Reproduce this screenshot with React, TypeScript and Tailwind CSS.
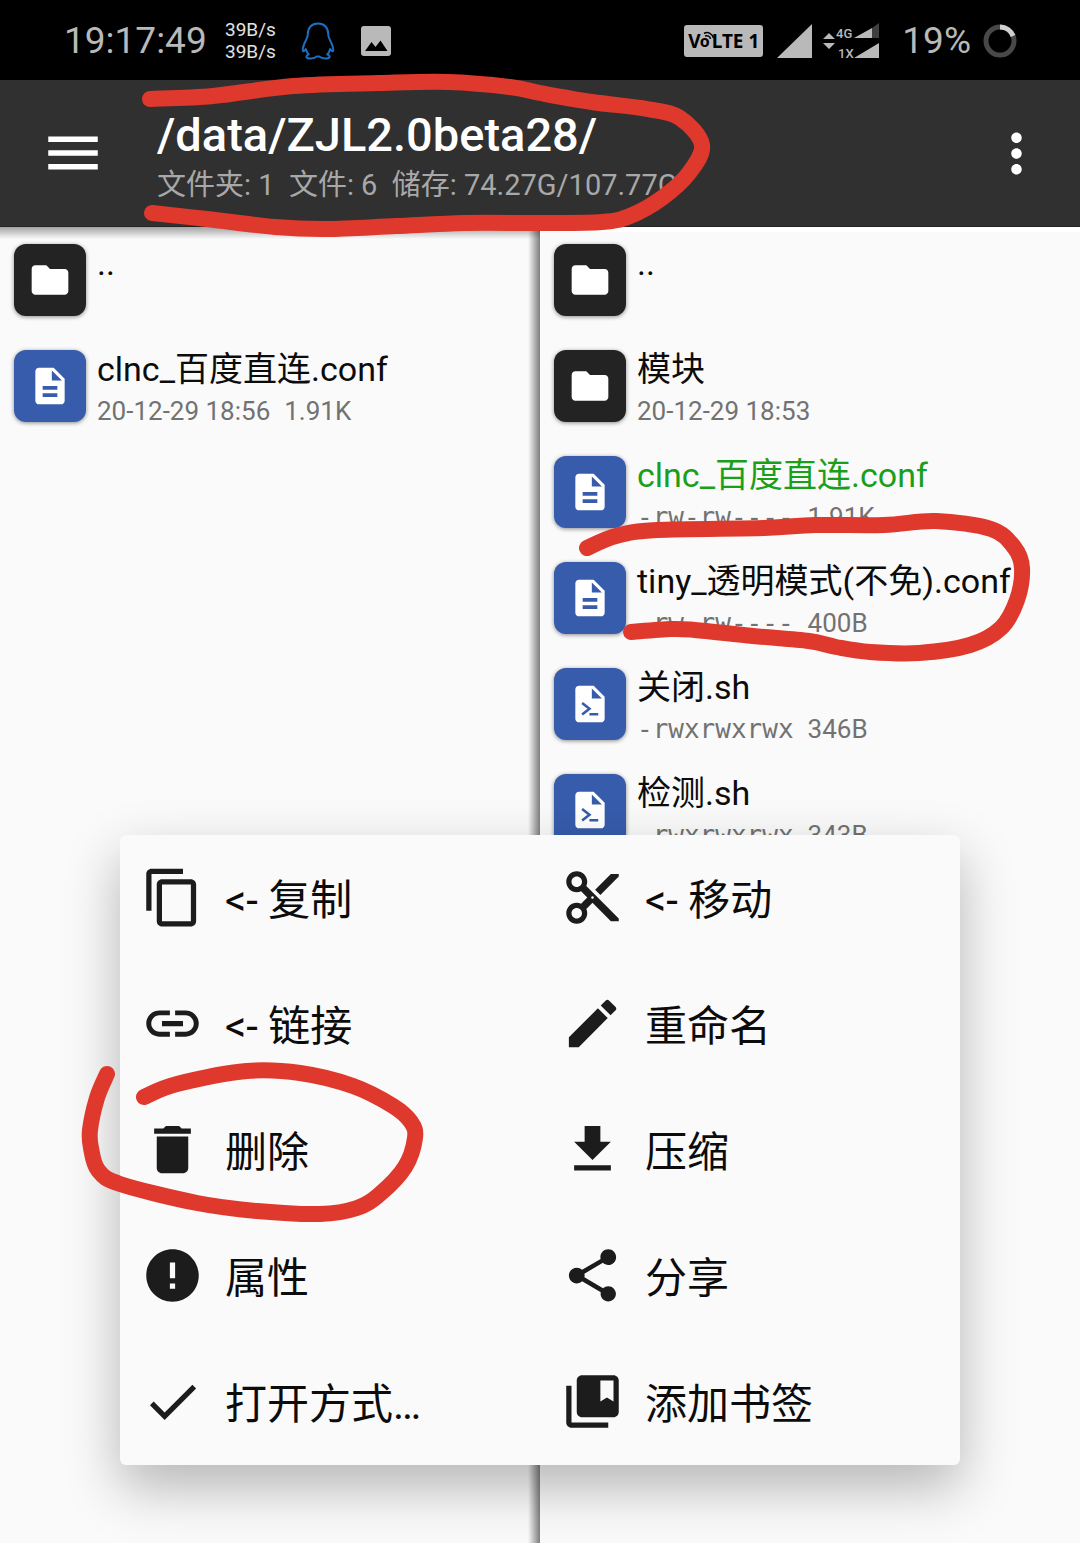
import type { ReactNode } from "react";
import type { IconType } from "react-icons";
import {
  MdCheck,
  MdCollectionsBookmark,
  MdContentCopy,
  MdContentCut,
  MdDelete,
  MdDescription,
  MdEdit,
  MdError,
  MdFileDownload,
  MdFolder,
  MdLink,
  MdMenu,
  MdMoreVert,
  MdShare,
} from "react-icons/md";

type Kind = "folder" | "doc" | "script";

interface Entry {
  name: string;
  kind: Kind;
  date?: string;
  perms?: string;
  size?: string;
  highlight?: boolean;
}

const leftEntries: Entry[] = [
  { name: "..", kind: "folder" },
  { name: "clnc_百度直连.conf", kind: "doc", date: "20-12-29 18:56", size: "1.91K" },
];

const rightEntries: Entry[] = [
  { name: "..", kind: "folder" },
  { name: "模块", kind: "folder", date: "20-12-29 18:53" },
  { name: "clnc_百度直连.conf", kind: "doc", perms: "-rw-rw----", size: "1.91K", highlight: true },
  { name: "tiny_透明模式(不免).conf", kind: "doc", perms: "-rw-rw----", size: "400B" },
  { name: "关闭.sh", kind: "script", perms: "-rwxrwxrwx", size: "346B" },
  { name: "检测.sh", kind: "script", perms: "-rwxrwxrwx", size: "343B" },
];

const actions: { label: string; icon: IconType }[] = [
  { label: "<- 复制", icon: MdContentCopy },
  { label: "<- 移动", icon: MdContentCut },
  { label: "<- 链接", icon: MdLink },
  { label: "重命名", icon: MdEdit },
  { label: "删除", icon: MdDelete },
  { label: "压缩", icon: MdFileDownload },
  { label: "属性", icon: MdError },
  { label: "分享", icon: MdShare },
  { label: "打开方式…", icon: MdCheck },
  { label: "添加书签", icon: MdCollectionsBookmark },
];

type Point = [number, number];

/* Freehand marker strokes, as the points the pen went through. */
const strokes: Point[][] = [
  [
    [150, 99], [213, 96], [293, 86], [379, 83], [448, 82], [510, 87], [540, 93], [592, 102],
    [647, 109], [680, 118], [702, 145], [689, 173], [662, 198], [630, 216], [602, 222], [540, 223],
    [465, 223], [396, 226], [327, 229], [275, 227], [207, 219], [152, 213],
  ],
  [
    [587, 548], [616, 536], [657, 530], [764, 528], [815, 525], [884, 525], [936, 521], [991, 529],
    [1014, 547], [1022, 568], [1017, 600], [1001, 628], [970, 645], [919, 653], [870, 652],
    [836, 647], [809, 641], [753, 636], [695, 630], [671, 629], [631, 632],
  ],
  [
    [144, 1097], [177, 1084], [247, 1071], [300, 1073], [353, 1086], [393, 1106], [411, 1122],
    [415, 1138], [405, 1167], [380, 1194], [357, 1208], [320, 1214], [257, 1211], [197, 1203],
    [120, 1184], [98, 1170], [91, 1148], [90, 1130], [97, 1098], [107, 1074],
  ],
];

function smooth(p: Point[]): string {
  let d = `M${p[0][0]} ${p[0][1]}`;
  for (let i = 0; i < p.length - 1; i++) {
    const a = p[i - 1] ?? p[i];
    const b = p[i];
    const c = p[i + 1];
    const e = p[i + 2] ?? c;
    d += `C${b[0] + (c[0] - a[0]) / 6} ${b[1] + (c[1] - a[1]) / 6} ${c[0] - (e[0] - b[0]) / 6} ${c[1] - (e[1] - b[1]) / 6} ${c[0]} ${c[1]}`;
  }
  return d;
}

function ScriptIcon() {
  return (
    <svg viewBox="0 0 24 24" className="size-11" aria-hidden="true">
      <path
        fill="currentColor"
        d="M14 2H6c-1.1 0-2 .9-2 2v16c0 1.1.9 2 2 2h12c1.1 0 2-.9 2-2V8l-6-6zm-1 7V3.5L18.5 9H13z"
      />
      <path d="M7.7 11.5l4 3.100-4 3.100M11.700 17.600h4.800" fill="none" stroke="#365cab" strokeWidth="1.4" />
    </svg>
  );
}

function Tile({ kind }: { kind: Kind }) {
  return (
    <span
      className={`flex size-18 shrink-0 items-center justify-center rounded-xl text-white shadow-[0_1px_4px_rgba(0,0,0,0.45)] ${
        kind === "folder" ? "bg-[#232323]" : "bg-[#365cab]"
      }`}
    >
      {kind === "folder" && <MdFolder className="size-11" />}
      {kind === "doc" && <MdDescription className="size-11" />}
      {kind === "script" && <ScriptIcon />}
    </span>
  );
}

function FileList({ entries, label }: { entries: Entry[]; label: string }) {
  return (
    <ul aria-label={label} className="pt-3">
      {entries.map((e) => (
        <li key={e.name}>
          <button type="button" className="flex h-[106px] w-full items-start gap-[11px] pt-[5px] pl-3.5 text-left">
            <Tile kind={e.kind} />
            <span className="flex min-w-0 flex-col whitespace-nowrap">
              <span className={`text-[34px] leading-[38px] ${e.highlight ? "text-[#1a9f1a]" : "text-[#0c0c0c]"}`}>
                {e.name}
              </span>
              <span className="flex gap-3.5 text-[26px] leading-[46px] text-[#727272]">
                {e.date && <span>{e.date}</span>}
                {e.perms && <span className="font-['DejaVu_Sans_Mono',monospace]">{e.perms}</span>}
                {e.size && <span>{e.size}</span>}
              </span>
            </span>
          </button>
        </li>
      ))}
    </ul>
  );
}

function StatusBar() {
  return (
    <div className="flex h-20 items-center justify-between bg-black pt-0.5 pr-[63px] pl-16 text-[#b9b9b9]">
      <div className="flex items-center">
        <span className="w-[161px] text-[37px]">19:17:49</span>
        <span className="flex w-[76px] flex-col text-[19px] leading-[22px] text-[#e2e2e2]">
          <span>39B/s</span>
          <span>39B/s</span>
        </span>
        <svg viewBox="0 0 34 38" className="h-[38px] w-[34px]" fill="none" stroke="#1b6ec2" strokeWidth="2" strokeLinejoin="round" aria-hidden="true">
          <path d="M17 1.500C10.500 1.500 6.800 6 6.800 12c0 3-.8 4-2 6.500C3 22 1.500 25 1.800 28.500c.3 1.500 1.500.8 3-1.500.6 2.400 1.500 4 3 5.400-1.800.8-2.600 1.700-2.300 2.700.6 2 7.800 1.800 10-.5h3c2.200 2.300 9.400 2.500 10 .5.3-1-.5-1.900-2.300-2.700 1.500-1.400 2.400-3 3-5.400 1.500 2.300 2.700 3 3 1.500.3-3.500-1.200-6.500-3-10-1.200-2.500-2-3.500-2-6.500C27.200 6 23.500 1.500 17 1.500z" />
        </svg>
        <svg viewBox="0 0 30 30" className="ml-[26px] size-[30px]" aria-hidden="true">
          <rect width="30" height="30" rx="3" fill="#b9b9b9" />
          <path d="M4 25l6.500-9 4 5 5-6.500L26.500 25z" fill="#000" />
        </svg>
      </div>
      <div className="flex items-center">
        <span className="flex h-8 w-[79px] items-center justify-center rounded-[3px] bg-[#b9b9b9] font-['Noto_Sans',sans-serif] text-[19px] leading-8 font-bold text-black">
          V
          <span className="relative -mx-px w-[13px] text-[16px]">
            o
            <svg viewBox="0 0 13 8" className="absolute top-1.5 left-0.5 h-2 w-[13px]" fill="none" stroke="#000" strokeWidth="1.500" aria-hidden="true">
              <path d="M2 2.500C6 0 10.500 3 11.500 7M3 5c2.500-.8 5 .2 5.500 3" />
            </svg>
          </span>
          LTE 1
        </span>
        <svg viewBox="0 -3 104 42" className="ml-3.5 h-[42px] w-[104px]" fill="#b9b9b9" aria-hidden="true">
          <path d="M0 35L35 1v34z" />
          <path d="M46 16l6-6 6 6zM46 20h12l-6 6z" />
          <path d="M77 15l18-10v10zM77 35l25-15v15z" />
          <path d="M95 5l7-5v15h-7z" fill="#3f3f3f" />
          <text x="59" y="15" fontSize="13" fontWeight="500">4G</text>
          <text x="61" y="35" fontSize="13" fontWeight="500">1X</text>
        </svg>
        <span className="ml-[21px] text-[37px]">19%</span>
        <svg viewBox="0 0 34 34" className="ml-3 size-[34px]" fill="none" strokeWidth="5" aria-hidden="true">
          <circle cx="17" cy="17" r="14" stroke="#484848" />
          <path d="M17 3A14 14 0 0 1 30 12" stroke="#d0d0d0" />
        </svg>
      </div>
    </div>
  );
}

function Toolbar() {
  return (
    <header className="flex h-[147px] items-center border-b border-[#242424] bg-[#303030] pr-8 pl-10">
      <button type="button" aria-label="菜单" className="text-white">
        <MdMenu className="size-[66px]" />
      </button>
      <div className="ml-[51px] min-w-0 flex-1 pt-2 whitespace-nowrap">
        <h1 className="text-[47px] leading-14 font-medium text-white">/data/ZJL2.0beta28/</h1>
        <p className="text-[29px] leading-11 whitespace-pre text-[#a8a8a8]">
          {"文件夹: 1  文件: 6  储存: 74.27G/107.77G"}
        </p>
      </div>
      <button type="button" aria-label="更多" className="text-white">
        <MdMoreVert className="size-[63px]" />
      </button>
    </header>
  );
}

function Panel({ children, inactive }: { children: ReactNode; inactive?: boolean }) {
  return (
    <section className="relative min-w-0 flex-1 overflow-hidden bg-[#fafafa]">
      {inactive ? (
        <>
          <div className="absolute inset-x-0 top-0 h-3 bg-linear-to-b from-black/35 to-transparent" />
          <div className="absolute inset-y-0 right-0 w-3 bg-linear-to-l from-black/50 to-transparent" />
        </>
      ) : (
        <div className="absolute inset-x-0 top-0 h-[5px] bg-white" />
      )}
      {children}
    </section>
  );
}

function ActionMenu() {
  return (
    <div
      role="menu"
      className="absolute inset-x-30 top-[835px] grid grid-cols-2 rounded-md bg-[#fafafa] shadow-[0_22px_54px_rgba(0,0,0,0.28)]"
    >
      {actions.map(({ label, icon: Icon }) => (
        <button
          key={label}
          type="button"
          role="menuitem"
          className="flex h-[126px] items-center gap-[21px] pb-0.5 pl-[21px] text-[42px] whitespace-nowrap text-[#0c0c0c]"
        >
          <Icon className="size-[63px] text-[#1c1c1c]" />
          <span className="pt-1.5">{label}</span>
        </button>
      ))}
    </div>
  );
}

function Markup() {
  return (
    <svg
      viewBox="0 0 1080 1543"
      className="pointer-events-none absolute inset-x-0 top-0 w-full"
      fill="none"
      stroke="#df382c"
      strokeWidth="16"
      strokeLinecap="round"
      strokeLinejoin="round"
      aria-hidden="true"
    >
      {strokes.map((s, i) => (
        <path key={i} d={smooth(s)} />
      ))}
    </svg>
  );
}

export default function App() {
  return (
    <div className="relative flex min-h-screen flex-col overflow-hidden bg-[#fafafa] font-['Roboto','Noto_Sans_CJK_SC',sans-serif]">
      <StatusBar />
      <Toolbar />
      <main className="flex flex-1">
        <Panel inactive>
          <FileList entries={leftEntries} label="左侧窗口" />
        </Panel>
        <Panel>
          <FileList entries={rightEntries} label="右侧窗口" />
        </Panel>
      </main>
      <ActionMenu />
      <Markup />
    </div>
  );
}
